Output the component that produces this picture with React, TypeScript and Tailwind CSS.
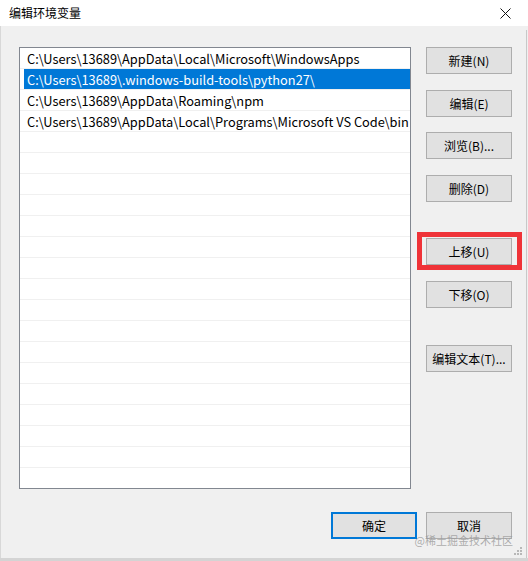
import React from "react";

const rows = [
  "C:\\Users\\13689\\AppData\\Local\\Microsoft\\WindowsApps",
  "C:\\Users\\13689\\.windows-build-tools\\python27\\",
  "C:\\Users\\13689\\AppData\\Roaming\\npm",
  "C:\\Users\\13689\\AppData\\Local\\Programs\\Microsoft VS Code\\bin",
];

function Btn({ label, className = "" }: { label: string; className?: string }) {
  return (
    <div
      className={
        "w-[86px] h-[27px] flex items-center justify-center bg-[#e1e1e1] border border-[#adadad] text-[12px] text-black " +
        className
      }
    >
      {label}
    </div>
  );
}

export default function App() {
  const all = Array.from({ length: 22 }, (_, i) => rows[i] ?? "");
  return (
    <div
      className="relative w-[528px] h-[561px] bg-[#f0f0f0] overflow-hidden"
      style={{ fontFamily: '"Noto Sans CJK SC", "Noto Sans", sans-serif' }}
    >
      {/* title bar */}
      <div className="h-[26px] bg-white flex items-center justify-between pl-[9px] pr-[17px]">
        <span className="text-[12px] text-black leading-none">编辑环境变量</span>
        <svg width="11" height="11" viewBox="0 0 11 11">
          <path d="M0.5 0.5 L10.5 10.5 M10.5 0.5 L0.5 10.5" stroke="#111" strokeWidth="1" />
        </svg>
      </div>

      {/* body */}
      <div className="flex pl-[19px] pt-[21px]">
        {/* list */}
        <div className="w-[392px] h-[442px] bg-white border border-[#828790] overflow-hidden">
          {all.map((t, i) => (
            <div key={i} className="h-[21px] border-b border-[#f0f0f0] flex">
              <div
                className={
                  "h-[20px] flex-1 flex items-center pl-[3px] pt-[1px] ml-[4px] text-[12.8px] whitespace-nowrap overflow-hidden " +
                  (i === 1 ? "bg-[#0078d7] text-white" : "text-black")
                }
              >
                {t}
              </div>
            </div>
          ))}
        </div>

        {/* buttons */}
        <div className="ml-[15px] flex flex-col">
          <Btn label="新建(N)" />
          <Btn label="编辑(E)" className="mt-[16px]" />
          <Btn label="浏览(B)..." className="mt-[15px]" />
          <Btn label="删除(D)" className="mt-[16px]" />
          <div className="relative mt-[36px]">
            <Btn label="上移(U)" />
            <div className="absolute left-[-9px] top-[-6px] w-[105px] h-[38px] border-[5px] border-[#ef3338]" />
          </div>
          <Btn label="下移(O)" className="mt-[16px]" />
          <Btn label="编辑文本(T)..." className="mt-[37px]" />
        </div>
      </div>

      {/* bottom buttons */}
      <div className="flex justify-end pr-[16px] mt-[23px] gap-[9px]">
        <div className="w-[86px] h-[27px] flex items-center justify-center bg-[#e1e1e1] border-2 border-[#0078d7] text-[12px] text-black">
          确定
        </div>
        <Btn label="取消" />
      </div>

      {/* watermark */}
      <div className="absolute right-[15px] top-[535px] text-[11px] leading-none text-[#9a9a9a]/80 whitespace-nowrap">
        @稀土掘金技术社区
      </div>

      {/* resize grip */}
      <svg className="absolute right-[6px] top-[546px]" width="9" height="9" viewBox="0 0 9 9">
        <rect x="7" y="1" width="2" height="2" fill="#b8b8b8" />
        <rect x="4" y="4" width="2" height="2" fill="#b8b8b8" />
        <rect x="7" y="4" width="2" height="2" fill="#b8b8b8" />
        <rect x="1" y="7" width="2" height="2" fill="#b8b8b8" />
        <rect x="4" y="7" width="2" height="2" fill="#b8b8b8" />
        <rect x="7" y="7" width="2" height="2" fill="#b8b8b8" />
      </svg>

      {/* window edges */}
      <div className="absolute right-[1px] top-[30px] bottom-[3px] w-[1px] bg-[#c8c8c8]" />
      <div className="absolute left-0 right-0 bottom-0 h-[3px] bg-[#d4d4d4]" />
      <div className="absolute left-0 top-[26px] bottom-[3px] w-[1px] bg-[#d8d8d8]" />
    </div>
  );
}
